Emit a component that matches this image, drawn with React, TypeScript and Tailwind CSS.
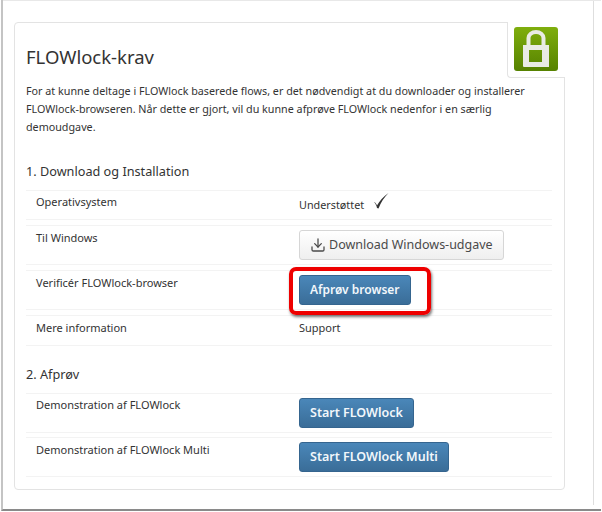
import React from 'react';
import { Download } from 'lucide-react';

const font = { fontFamily: '"Noto Sans", sans-serif' };

const Row = ({ label, className, labelClass = 'pt-[2px]', children }: { label: string; className: string; labelClass?: string; children: React.ReactNode }) => (
  <div className={`flex border-y border-[#f3f3f3] pl-[10px] ${className}`}>
    <div className={`w-[263px] text-[11px] leading-[20px] text-[#333] ${labelClass}`}>{label}</div>
    <div className="flex-1">{children}</div>
  </div>
);

const PrimaryButton = ({ className, children }: { className: string; children: React.ReactNode }) => (
  <button className={`h-[30px] rounded-[3px] border border-[#35658f] bg-gradient-to-b from-[#4a87b9] to-[#3a6d98] px-[10px] font-semibold text-[#f2f7fb] ${className}`}>
    {children}
  </button>
);

export default function App() {
  return (
    <div style={font} className="h-[512px] w-[602px] overflow-hidden bg-white pl-[1px] text-[#333]">
      <div className="relative h-[511px] w-[600px] border-b-2 border-l-2 border-[#c4c4c4] border-b-[#8a8a8a] pl-[11px] pt-[22px]">
        <div className="absolute bottom-[4px] right-[7px] top-0 w-px bg-[#dedede]" />
        <div className="absolute left-0 right-0 top-0 h-px bg-[#e8e8e8]" />

        <section className="relative h-[468px] w-[551px] rounded-[4px] border-[1.5px] border-[#e3e3e3] pl-[11px] pr-[12px] pt-[20px]">
          {/* lock badge */}
          <div className="absolute right-[-1px] top-[-1px] flex h-[56px] w-[58px] items-center justify-center rounded-bl-[4px] border-b-[1.5px] border-l-[1.5px] border-[#e3e3e3] bg-white pb-[2px] pr-[2px]">
            <svg width="44" height="44" viewBox="0 0 44 44">
              <defs>
                <linearGradient id="lockBg" x1="0" y1="0" x2="0" y2="1">
                  <stop offset="0" stopColor="#7fae0d" />
                  <stop offset="1" stopColor="#568200" />
                </linearGradient>
              </defs>
              <rect width="44" height="44" rx="3" fill="url(#lockBg)" />
              <path d="M14.5 19V11a7.500 6 0 0 1 15 0v8" fill="none" stroke="#e9ebe4" strokeWidth="4" />
              <path fillRule="evenodd" fill="#e9ebe4" d="M9 18h26v22H10a1 1 0 0 1-1-1zM15 23v12h13V23z" />
            </svg>
          </div>

          <h1 className="text-[18.5px] font-normal leading-[28px] text-[#333]">FLOWlock-krav</h1>
          <p className="mt-[11px] w-[515px] text-[10.76px] leading-[18px] text-[#333]">
            For at kunne deltage i FLOWlock baserede flows, er det nødvendigt at du downloader og installerer
            FLOWlock-browseren. Når dette er gjort, vil du kunne afprøve FLOWlock nedenfor i en særlig demoudgave.
          </p>

          <h2 className="mb-[9px] mt-[25px] text-[12.7px] font-normal leading-[20px]">1. Download og Installation</h2>
          <Row label="Operativsystem" className="mb-[5px] h-[30px]" labelClass="pt-[1px]">
            <div className="flex items-start pt-[2px] text-[10.8px] leading-[24px]">
              Understøttet
              <svg className="ml-[9px]" width="16" height="16" viewBox="0 0 16 16">
                <path d="M1 9c1.500 .5 2.500 2 3 3.500C6.500 8 10 4 15.500 0 11 4.500 8 9 5.500 15.500L4 15C3.500 12.500 2.500 10.500 1 9z" fill="#333" />
              </svg>
            </div>
          </Row>
          <Row label="Til Windows" className="mb-[5px] h-[40px]">
            <button className="mt-[4px] flex h-[30px] items-center rounded-[3px] border border-[#d6d6d6] bg-gradient-to-b from-white to-[#efefef] pl-[10px] pr-[10px] text-[12.5px] text-[#4a4a4a]">
              <Download size={16} className="mr-[3px]" strokeWidth={1.9} />
              Download Windows-udgave
            </button>
          </Row>
          <Row label="Verificér FLOWlock-browser" className="mb-[5px] h-[40px]">
            <div className="pt-[4px]">
              <PrimaryButton className="text-[12px]">Afprøv browser</PrimaryButton>
            </div>
          </Row>
          <Row label="Mere information" className="mb-[5px] h-[31px]">
            <div className="pt-[2px] text-[11px] leading-[20px]">Support</div>
          </Row>

          <h2 className="mb-[9px] mt-[18px] text-[12.7px] font-normal leading-[20px]">2. Afprøv</h2>
          <Row label="Demonstration af FLOWlock" className="mb-[4px] h-[40px]" labelClass="pt-[1px]">
            <div className="pt-[4px]">
              <PrimaryButton className="text-[12.5px]">Start FLOWlock</PrimaryButton>
            </div>
          </Row>
          <Row label="Demonstration af FLOWlock Multi" className="h-[40px]">
            <div className="pt-[4px]">
              <PrimaryButton className="text-[12.5px]">Start FLOWlock Multi</PrimaryButton>
            </div>
          </Row>
        </section>

        {/* red highlight */}
        <div className="absolute left-[286px] top-[267px] h-[48px] w-[142px] rounded-[7px] border-[4px] border-[#ee0000] shadow-[1px_2px_3px_rgba(0,0,0,0.55)]" />
      </div>
    </div>
  );
}
